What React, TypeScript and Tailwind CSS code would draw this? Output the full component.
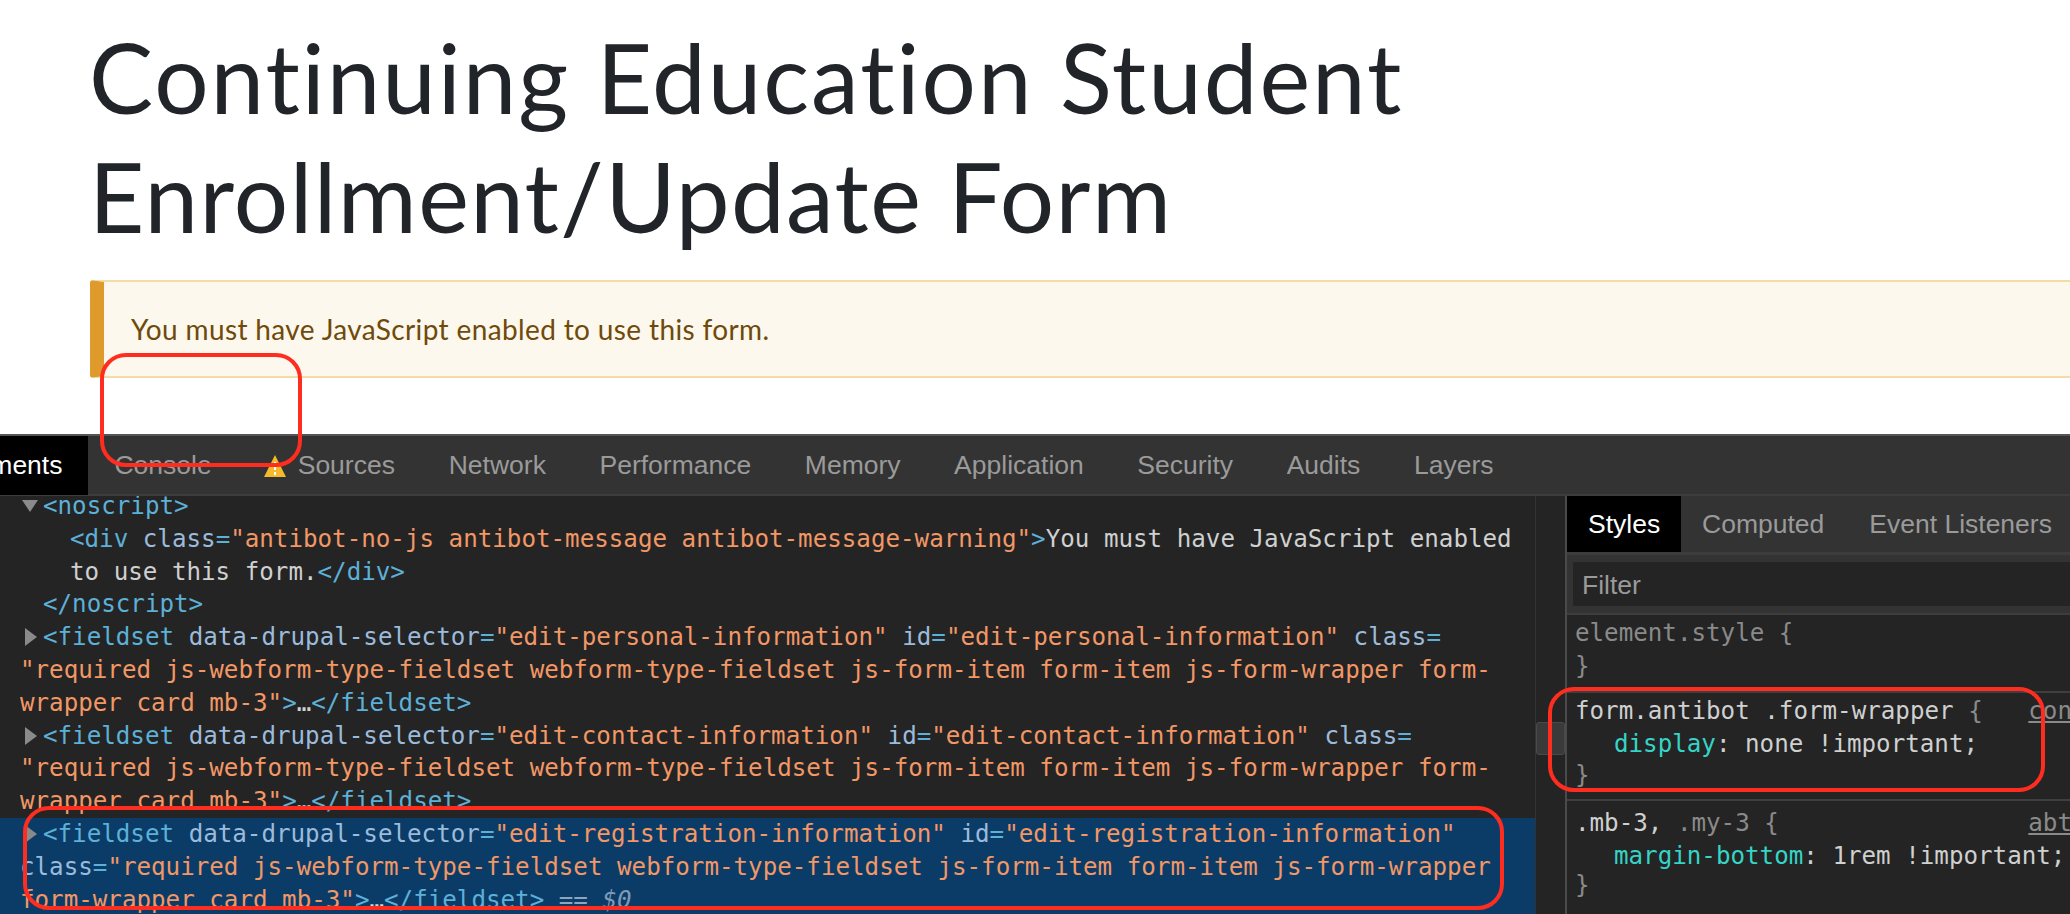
type TokenKind = 't' | 'a' | 'v' | 'x';
type Token = [TokenKind, string];

const tokenColors: Record<TokenKind, string> = {
   t: 'text-[#5db0d7]',
   a: 'text-[#9bbbdc]',
   v: 'text-[#f29766]',
   x: 'text-[#cfd0d0]',
};

type Row = {
   indent: string;
   arrow?: 'open' | 'closed';
   tokens: Token[];
};

const required = 'required js-webform-type-fieldset webform-type-fieldset js-form-item form-item js-form-wrapper form-';

const rows: Row[] = [
   { indent: 'pl-[43px]', arrow: 'open', tokens: [['t', '<noscript>']] },
   {
      indent: 'pl-[70px]',
      tokens: [
         ['t', '<div '],
         ['a', 'class'],
         ['t', '='],
         ['v', '"antibot-no-js antibot-message antibot-message-warning"'],
         ['t', '>'],
         ['x', 'You must have JavaScript enabled'],
      ],
   },
   {
      indent: 'pl-[70px]',
      tokens: [
         ['x', 'to use this form.'],
         ['t', '</div>'],
      ],
   },
   { indent: 'pl-[43px]', tokens: [['t', '</noscript>']] },
   {
      indent: 'pl-[43px]',
      arrow: 'closed',
      tokens: [
         ['t', '<fieldset '],
         ['a', 'data-drupal-selector'],
         ['t', '='],
         ['v', '"edit-personal-information"'],
         ['a', ' id'],
         ['t', '='],
         ['v', '"edit-personal-information"'],
         ['a', ' class'],
         ['t', '='],
      ],
   },
   { indent: 'pl-[20px]', tokens: [['v', `"${required}`]] },
   {
      indent: 'pl-[20px]',
      tokens: [
         ['v', 'wrapper card mb-3"'],
         ['t', '>'],
         ['x', '…'],
         ['t', '</fieldset>'],
      ],
   },
   {
      indent: 'pl-[43px]',
      arrow: 'closed',
      tokens: [
         ['t', '<fieldset '],
         ['a', 'data-drupal-selector'],
         ['t', '='],
         ['v', '"edit-contact-information"'],
         ['a', ' id'],
         ['t', '='],
         ['v', '"edit-contact-information"'],
         ['a', ' class'],
         ['t', '='],
      ],
   },
   { indent: 'pl-[20px]', tokens: [['v', `"${required}`]] },
   {
      indent: 'pl-[20px]',
      tokens: [
         ['v', 'wrapper card mb-3"'],
         ['t', '>'],
         ['x', '…'],
         ['t', '</fieldset>'],
      ],
   },
];

const selectedRows: Row[] = [
   {
      indent: 'pl-[43px]',
      arrow: 'closed',
      tokens: [
         ['t', '<fieldset '],
         ['a', 'data-drupal-selector'],
         ['t', '='],
         ['v', '"edit-registration-information"'],
         ['a', ' id'],
         ['t', '='],
         ['v', '"edit-registration-information"'],
      ],
   },
   {
      indent: 'pl-[20px]',
      tokens: [
         ['a', 'class'],
         ['t', '='],
         ['v', '"required js-webform-type-fieldset webform-type-fieldset js-form-item form-item js-form-wrapper'],
      ],
   },
   {
      indent: 'pl-[20px]',
      tokens: [
         ['v', 'form-wrapper card mb-3"'],
         ['t', '>'],
         ['x', '…'],
         ['t', '</fieldset>'],
      ],
   },
];

const CodeRow = ({ row, current }: { row: Row; current?: boolean }) => (
   <div className={`relative h-[32.8px] whitespace-pre ${row.indent}`}>
      {row.arrow === 'open' && (
         <svg className="absolute left-[21px] top-[9px]" width="18" height="14" viewBox="0 0 18 14">
            <path d="M1 1h16L9 13z" fill="#8a8a8a" />
         </svg>
      )}
      {row.arrow === 'closed' && (
         <svg className="absolute left-[24px] top-[7px]" width="13" height="18" viewBox="0 0 13 18">
            <path d="M1 0v18L13 9z" fill="#8a8a8a" />
         </svg>
      )}
      {row.tokens.map(([kind, text], i) => (
         <span key={i} className={tokenColors[kind]}>
            {text}
         </span>
      ))}
      {current && (
         <>
            <span className="text-[#8fa5bd]"> == </span>
            <span className="italic text-[#7f9ab5]">$0</span>
         </>
      )}
   </div>
);

const tabs = ['Network', 'Performance', 'Memory', 'Application', 'Security', 'Audits', 'Layers'];

const App = () => {
   return (
      <div className="relative flex h-[914px] w-[2070px] flex-col overflow-hidden bg-white font-['Liberation_Sans',sans-serif]">
         <h1 className="pl-[89px] pt-[17px] font-['Lato',sans-serif] text-[96px] font-normal leading-[119px] text-[#212529] [font-variant-ligatures:none]">
            <span className="block tracking-[1.96px]">Continuing Education Student</span>
            <span className="block tracking-[1.4px]">Enrollment/Update Form</span>
         </h1>

         <div className="ml-[90px] mt-[25px] flex h-[98px] items-center rounded-l-[3px] border-y-2 border-l-[14px] border-y-[#f3dca6] border-l-[#de9a2a] bg-[#fcf8ee] pl-[27px] font-['Lato',sans-serif] text-[28px] tracking-[0.37px] text-[#6f4a0a]">
            You must have JavaScript enabled to use this form.
         </div>

         <div className="mt-[56px] flex min-h-0 flex-1 flex-col border-t-2 border-[#555555] bg-[#242424]">
            <div className="flex h-[60px] shrink-0 items-center border-b-2 border-[#3d3d3d] bg-[#333333] pt-[1px] text-[26.5px] text-[#9a9a9a]">
               <div className="-my-[1px] -ml-[74px] flex h-[59px] items-center bg-black px-[26px] text-white">Elements</div>
               <div className="px-[26px]">Console</div>
               <div className="flex items-center gap-[12px] pl-[26px] pr-[27px]">
                  <svg width="22" height="22" viewBox="0 0 22 22">
                     <path d="M11 0 22 22H0z" fill="#f4b92c" />
                     <path d="M10 7h2v8h-2zM10 17h2v3h-2z" fill="#ffffff" />
                  </svg>
                  Sources
               </div>
               {tabs.map((tab) => (
                  <div key={tab} className="px-[26.8px]">
                     {tab}
                  </div>
               ))}
            </div>

            <div className="flex min-h-0 flex-1">
               <div className="min-w-0 w-[1535px] shrink-0 overflow-hidden font-['DejaVu_Sans_Mono',monospace] text-[24.2px] leading-[32.8px]">
                  <div className="-mt-[6px]">
                     {rows.map((row, i) => (
                        <CodeRow key={i} row={row} />
                     ))}
                     <div className="bg-[#0b3c68] pb-[8px]">
                        {selectedRows.map((row, i) => (
                           <CodeRow key={i} row={row} current={i === 2} />
                        ))}
                     </div>
                  </div>
               </div>

               <div className="relative w-[30px] shrink-0 border-l border-[#333333]">
                  <div className="absolute left-0 top-[226px] h-[33px] w-[29px] rounded-[3px] border border-[#4a4a4a] bg-[#3a3a3a]" />
               </div>

               <div className="flex min-w-0 flex-1 flex-col overflow-hidden border-l-2 border-[#4a4a4a]">
                  <div className="flex h-[59px] shrink-0 items-center border-b-[3px] border-[#3d3d3d] bg-[#333333] text-[26.5px] text-[#9a9a9a]">
                     <div className="flex h-full w-[114px] items-center bg-black pl-[21px] pt-[2px] text-white">Styles</div>
                     <div className="pl-[21px] pt-[2px]">Computed</div>
                     <div className="pl-[45px] pt-[2px]">Event Listeners</div>
                  </div>
                  <div className="shrink-0 border-b-2 border-[#3d3d3d] bg-[#333333] py-[7px] pl-[6px]">
                     <div className="flex h-[44px] items-center bg-[#242424] pl-[9px] pt-[3px] text-[26.5px] text-[#9a9a9a]">Filter</div>
                  </div>
                  <div className="font-['DejaVu_Sans_Mono',monospace] text-[24.2px] leading-[33px] whitespace-pre">
                     <div className="border-b-2 border-[#3f3f3f] pb-[8px] pl-[8px] pt-[2px] text-[#8a8a8a]">
                        <div>{'element.style {'}</div>
                        <div>{'}'}</div>
                     </div>
                     <div className="relative border-b-2 border-[#3f3f3f] pb-[7px] pl-[8px] pt-[2px] text-[#8a8a8a]">
                        <span className="absolute right-[-2px] top-[2px] text-[#8a8a8a] underline">con</span>
                        <div>
                           <span className="text-[#cfd0d0]">form.antibot .form-wrapper</span>
                           {' {'}
                        </div>
                        <div className="h-[33px] pl-[39px]">
                           <span className="text-[#35d4c7]">display</span>
                           <span className="text-[#cfd0d0]">: none !important;</span>
                        </div>
                        <div className="-mt-[2px]">{'}'}</div>
                     </div>
                     <div className="relative border-b-2 border-[#3f3f3f] pb-[12px] pl-[8px] pt-[6px] text-[#8a8a8a]">
                        <span className="absolute right-[-2px] top-[6px] text-[#8a8a8a] underline">abt</span>
                        <div>
                           <span className="text-[#cfd0d0]">.mb-3,</span> .my-3 {'{'}
                        </div>
                        <div className="pl-[39px]">
                           <span className="text-[#35d4c7]">margin-bottom</span>
                           <span className="text-[#cfd0d0]">: 1rem !important;</span>
                        </div>
                        <div className="-mt-[4px]">{'}'}</div>
                     </div>
                  </div>
               </div>
            </div>
         </div>

         {/* red annotations drawn on top of the screenshot */}
         <div className="absolute left-[100px] top-[353px] h-[114px] w-[202px] rounded-[26px] border-[4.5px] border-[#ff2d20]" />
         <div className="absolute left-[23px] top-[806px] h-[104px] w-[1481px] rounded-[26px] border-[4.5px] border-[#ff2d20]" />
         <div className="absolute left-[1548px] top-[687px] h-[105px] w-[497px] rounded-[26px] border-[4.5px] border-[#ff2d20]" />
      </div>
   );
};

export default App;
